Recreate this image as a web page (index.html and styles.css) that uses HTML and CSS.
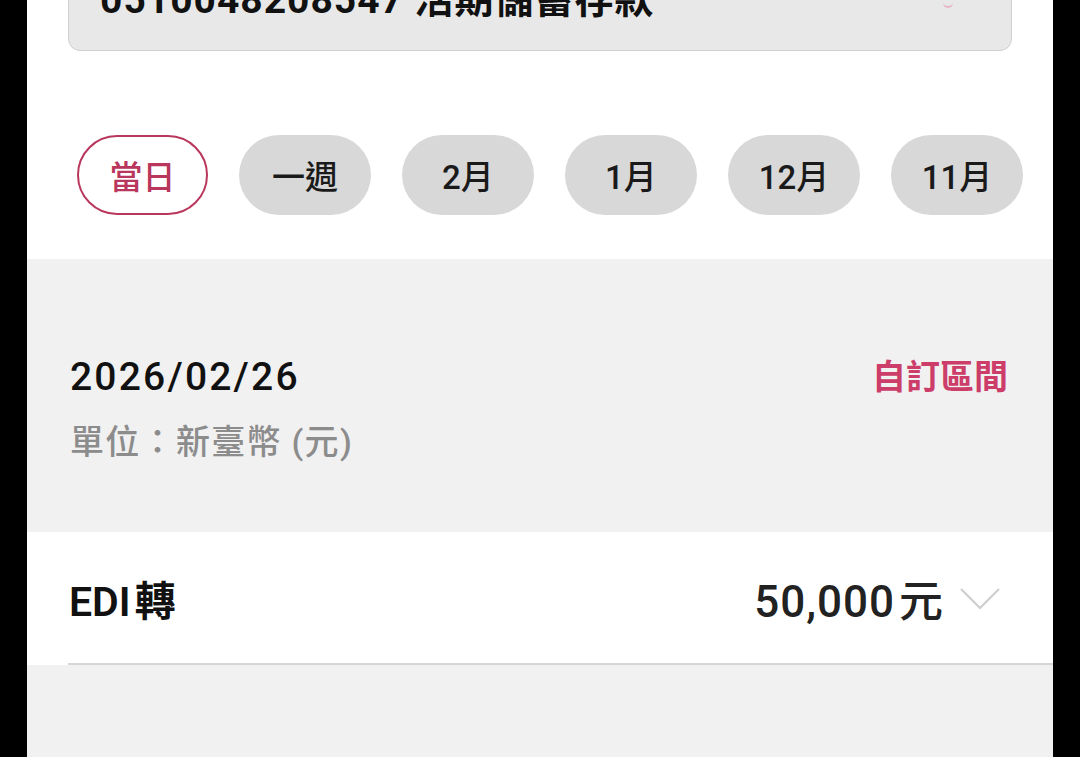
FILE: index.html
```html
<!DOCTYPE html>
<html lang="zh-Hant">
<head>
    <meta charset="UTF-8" />
    <meta name="viewport" content="width=device-width, initial-scale=1" />
    <title>帳戶明細</title>
    <link rel="stylesheet" href="styles.css">
</head>
<body>
    <div class="phone">
        <div class="account">
            <span class="account-name">0510048208547 活期儲蓄存款</span>
            <span class="account-mark"></span>
        </div>

        <div class="chips">
            <button class="chip active">當日</button>
            <button class="chip">一週</button>
            <button class="chip">2月</button>
            <button class="chip">1月</button>
            <button class="chip">12月</button>
            <button class="chip">11月</button>
        </div>

        <div class="summary">
            <div class="summary-top">
                <span class="date">2026/02/26</span>
                <span class="custom">自訂區間</span>
            </div>
            <div class="unit">單位：新臺幣 (元)</div>
        </div>

        <div class="list">
            <div class="item">
                <span class="item-name">EDI 轉</span>
                <span class="item-right">
                    <span class="amount">50,000 元</span>
                    <svg class="chevron" width="40" height="22" viewBox="0 0 40 22">
                        <polyline points="1,1 20,20 39,1" fill="none" stroke="#cdcdcd" stroke-width="2" />
                    </svg>
                </span>
            </div>
        </div>

        <div class="rest"></div>
    </div>
</body>
</html>
```

FILE: styles.css
```css
body {
    margin: 0;
    background-color: #000000;
    font-family: "Roboto", "Noto Sans CJK TC", sans-serif;
}
.phone {
    margin: 0 27px;
    height: 757px;
    background-color: #ffffff;
    overflow: hidden;
}
.account {
    box-sizing: border-box;
    height: 101px;
    margin: -50px 41px 0 41px;
    padding: 29px 0 0 31px;
    background-color: #e8e8e8;
    border: 1px solid #d0d0d0;
    border-radius: 12px;
    display: flex;
    justify-content: space-between;
}
.account-name {
    font-size: 39px;
    line-height: 40px;
    font-weight: 700;
    letter-spacing: 1px;
    color: #111111;
}
.account-mark {
    width: 10px;
    height: 4px;
    margin: 22px 58px 0 0;
    border-bottom: 2px solid #e8b3c3;
    border-radius: 0 0 6px 6px;
}
.chips {
    display: flex;
    gap: 31px;
    margin: 84px 0 44px 50px;
}
.chip {
    box-sizing: border-box;
    width: 132px;
    height: 80px;
    border: none;
    border-radius: 40px;
    background-color: #d8d8d8;
    color: #1a1a1a;
    font-family: "Roboto", "Noto Sans CJK TC", sans-serif;
    font-size: 33px;
    font-weight: 500;
    padding: 0;
}
.chip.active {
    width: 131px;
    background-color: #ffffff;
    border: 2px solid #b9365c;
    color: #b9365c;
}
.summary {
    box-sizing: border-box;
    height: 273px;
    padding: 96px 45px 0 43px;
    background-color: #f1f1f1;
}
.summary-top {
    display: flex;
    justify-content: space-between;
    align-items: center;
}
.date {
    font-size: 39px;
    line-height: 44px;
    font-weight: 500;
    letter-spacing: 2.2px;
    color: #111111;
}
.custom {
    font-size: 34px;
    line-height: 44px;
    font-weight: 700;
    color: #cc3d69;
}
.unit {
    margin-top: 23px;
    font-size: 34px;
    line-height: 40px;
    font-weight: 500;
    letter-spacing: 1.3px;
    color: #8c8c8c;
}
.list {
    background-color: #ffffff;
}
.item {
    height: 131px;
    margin-left: 41px;
    padding-right: 53px;
    border-bottom: 2px solid #d6d6d6;
    display: flex;
    justify-content: space-between;
    align-items: center;
}
.item-name {
    padding-left: 1px;
    font-size: 41px;
    font-weight: 600;
    word-spacing: -6px;
    color: #111111;
}
.item-right {
    display: flex;
    align-items: center;
    gap: 16px;
}
.amount {
    font-size: 44px;
    font-weight: 500;
    letter-spacing: 1px;
    word-spacing: -8px;
    color: #222222;
}
.chevron {
    display: block;
    margin-top: 2px;
}
.rest {
    height: 200px;
    background-color: #f1f1f1;
}
```
